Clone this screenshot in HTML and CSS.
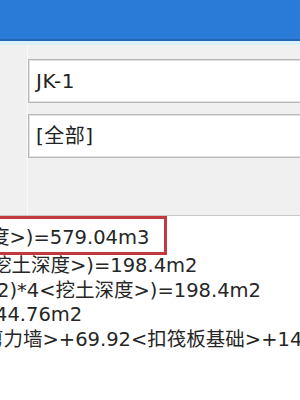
FILE: index.html
```html
<!DOCTYPE html>
<html lang="zh-CN">
<head>
  <meta charset="UTF-8">
  <meta name="viewport" content="width=device-width, initial-scale=1.0">
  <title>构件属性</title>
  <link rel="stylesheet" href="styles.css">
</head>
<body>
  <div class="titlebar"></div>
  <div class="glow"></div>

  <div class="panel">
    <div class="side"></div>
    <div class="fields">
      <div class="field">JK-1</div>
      <div class="field">[全部]</div>
    </div>
  </div>

  <div class="results">
    <div class="line line-marked">度&gt;)=579.04m3</div>
    <div class="line line-2">挖土深度&gt;)=198.4m2</div>
    <div class="line line-3">2)*4&lt;挖土深度&gt;)=198.4m2</div>
    <div class="line line-4">44.76m2</div>
    <div class="line line-5">剪力墙&gt;+69.92&lt;扣筏板基础&gt;+14.76</div>
  </div>
</body>
</html>
```

FILE: styles.css
```css
* {
  margin: 0;
  padding: 0;
  box-sizing: border-box;
}

body {
  width: 300px;
  height: 400px;
  overflow: hidden;
  background-color: white;
  font-family: "DejaVu Sans", "Noto Sans CJK SC", sans-serif;
  color: #262626;
}

.titlebar {
  height: 41px;
  background-color: #2a7bd7;
  border-bottom: 2px solid #2566b4;
}

.glow {
  height: 4px;
  background-color: #dbf1fa;
}

.panel {
  display: flex;
  height: 171px;
  background-color: #f0f0f0;
  border-bottom: 1px solid #c8c8c8;
}

.side {
  width: 28px;
  flex-shrink: 0;
  border-right: 1px solid #f9f9f9;
}

.fields {
  flex: 1;
  display: flex;
  flex-direction: column;
  gap: 11px;
  padding-top: 14px;
  margin-right: -20px;
}

.field {
  height: 44px;
  padding-left: 7px;
  background-color: white;
  border: 1px solid #b8b8b8;
  box-shadow: inset 0 0 0 1px #e2e2e2;
  font-size: 20px;
  line-height: 42px;
  letter-spacing: 0.5px;
  color: #222;
}

.results {
  white-space: nowrap;
}

.line {
  font-size: 19.5px;
  line-height: 24.6px;
}

.line-marked {
  width: fit-content;
  margin-left: -13px;
  padding: 7px 15px 1.4px 0;
  border: 3px solid #c23a3e;
}

.line-2 {
  margin-top: -1px;
  margin-left: -8px;
}

.line-3 {
  margin-left: -3px;
}

.line-4 {
  margin-left: -5px;
}

.line-5 {
  margin-left: -16px;
}
```
